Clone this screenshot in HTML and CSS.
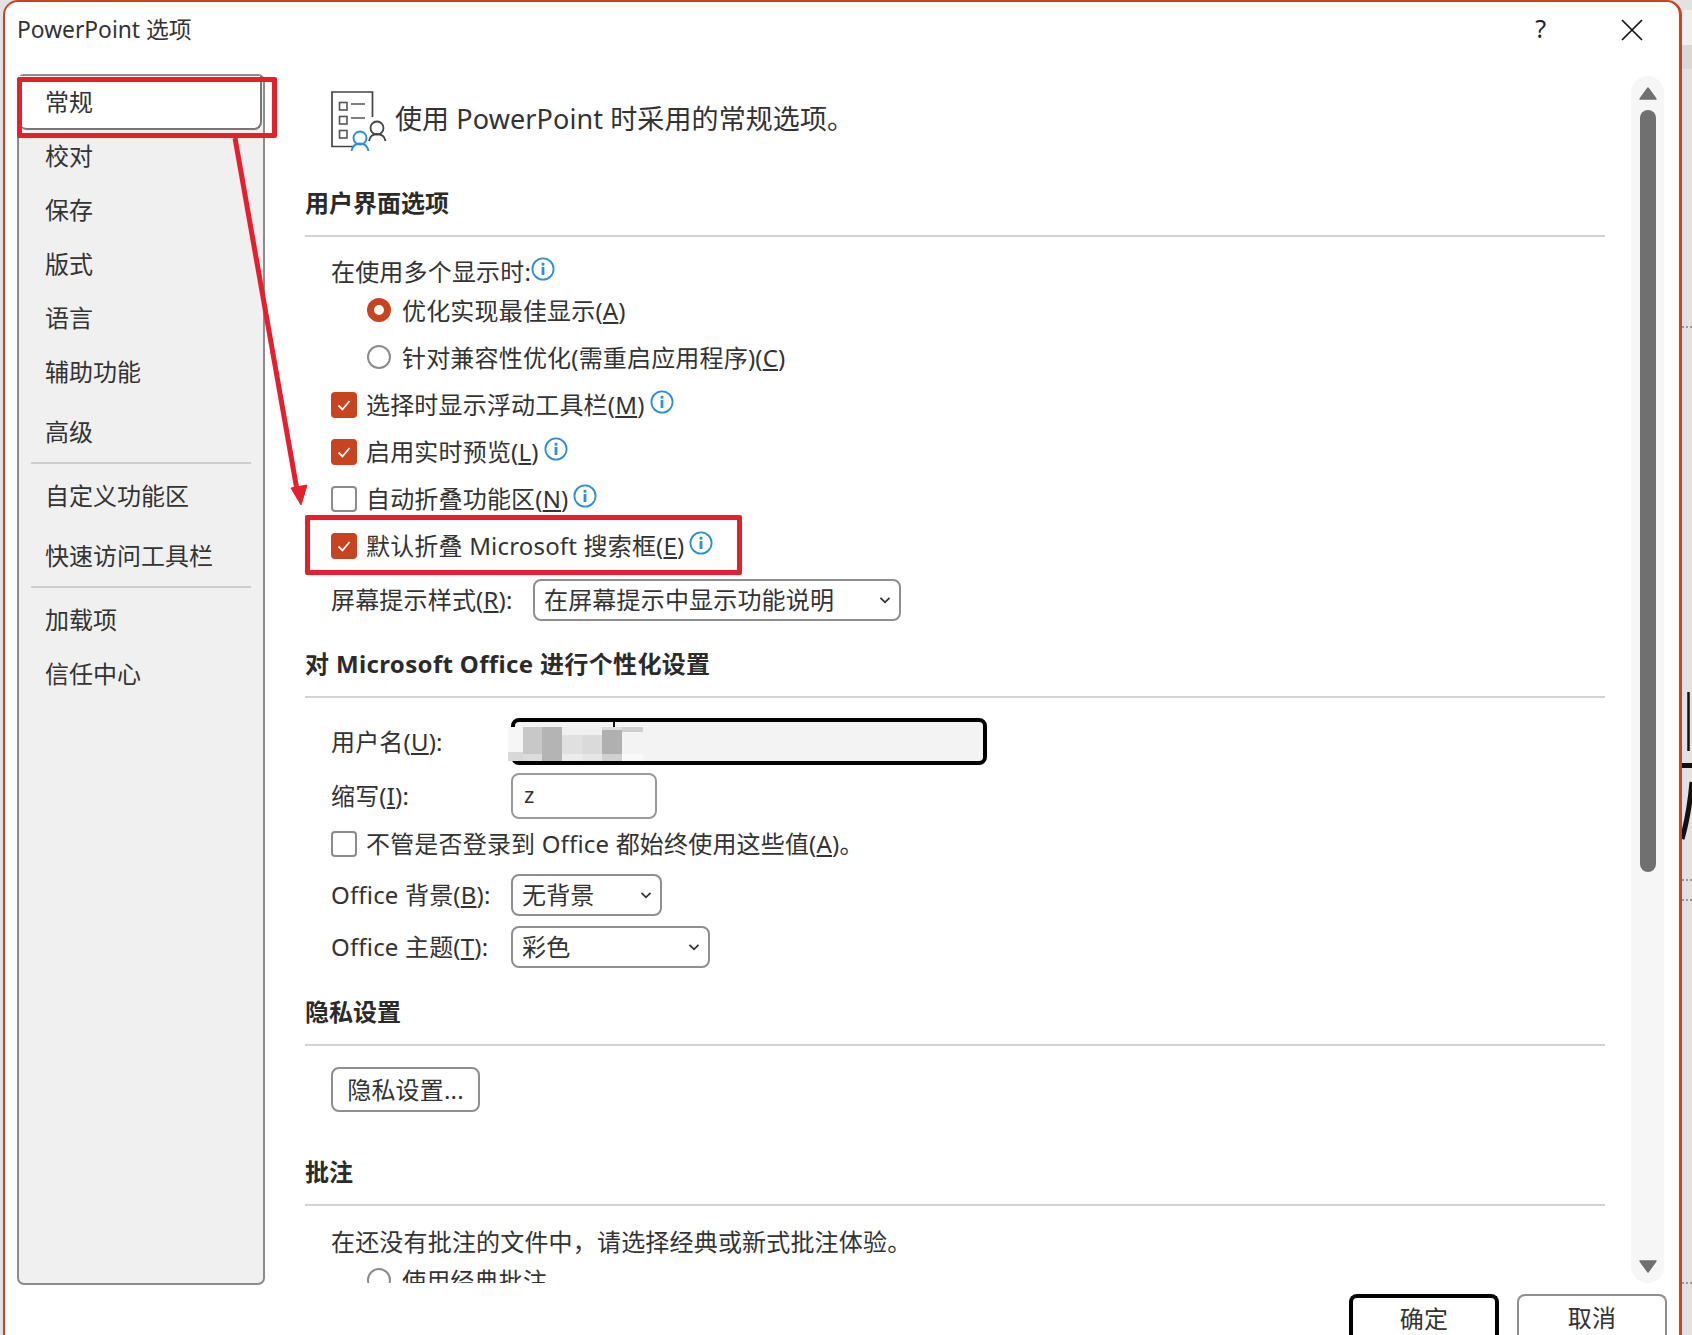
FILE: index.html
```html
<!DOCTYPE html>
<html lang="zh-CN">
<head>
<meta charset="utf-8">
<title>PowerPoint 选项</title>
<link rel="stylesheet" href="styles.css">
</head>
<body>
<svg width="0" height="0" class="defs">
  <symbol id="info" viewBox="0 0 24 24">
    <circle cx="12" cy="12" r="10.6" fill="#fff" stroke="#2f8fcf" stroke-width="1.8"/>
    <rect x="10.6" y="10" width="2.8" height="8" fill="#2f8fcf"/>
    <rect x="10.6" y="5.8" width="2.8" height="2.8" fill="#2f8fcf"/>
  </symbol>
  <symbol id="check" viewBox="0 0 26 26">
    <path d="M7.5 13.5l4 4 7-8.5" fill="none" stroke="#fff" stroke-width="1.8"/>
  </symbol>
  <symbol id="chev" viewBox="0 0 12 12">
    <path d="M1.5 3.8l4.500 4.500 4.500-4.500" fill="none" stroke="#333" stroke-width="1.8"/>
  </symbol>
</svg>

<div class="dialog">
  <header class="titlebar">
    <span class="title">PowerPoint 选项</span>
    <span class="help">?</span>
    <svg class="close" width="22" height="22" viewBox="0 0 22 22"><path d="M1 1l20 20M21 1L1 21" stroke="#111" stroke-width="1.7" fill="none"/></svg>
  </header>

  <div class="panes">
    <nav class="sidebar">
      <div class="nav-item selected">常规</div>
      <div class="nav-item">校对</div>
      <div class="nav-item">保存</div>
      <div class="nav-item">版式</div>
      <div class="nav-item">语言</div>
      <div class="nav-item">辅助功能</div>
      <div class="nav-item advanced">高级</div>
      <div class="nav-sep"></div>
      <div class="nav-item after-sep">自定义功能区</div>
      <div class="nav-item advanced">快速访问工具栏</div>
      <div class="nav-sep"></div>
      <div class="nav-item after-sep-b">加载项</div>
      <div class="nav-item">信任中心</div>
    </nav>

    <main class="content">
      <div class="hero">
        <svg class="hero-icon" width="56" height="60" viewBox="331 91 56 60">
          <path d="M372.5 117V92H332v54.5h21" fill="none" stroke="#444" stroke-width="1.7"/>
          <g fill="none" stroke="#555" stroke-width="1.6">
            <rect x="339.500" y="102.500" width="7.500" height="7.500"/>
            <rect x="339.500" y="116.500" width="7.500" height="7.500"/>
            <rect x="339.500" y="130.500" width="7.500" height="7.500"/>
            <path d="M351 104h14M351 118h14"/>
          </g>
          <circle cx="377" cy="128" r="6.500" fill="#fff" stroke="#444" stroke-width="1.8"/>
          <path d="M369 141c1-5 4-7 8-7s7.500 2 8.500 7" fill="none" stroke="#444" stroke-width="1.8"/>
          <circle cx="360" cy="138" r="6.500" fill="#fff" stroke="#2f8fcf" stroke-width="2"/>
          <path d="M351.500 151c1-5 4.500-7.500 8.500-7.500s7.500 2.500 8.500 7.500" fill="none" stroke="#2f8fcf" stroke-width="2"/>
        </svg>
        <span class="hero-text">使用 PowerPoint 时采用的常规选项。</span>
      </div>

      <h2 class="sec">用户界面选项</h2>
      <div class="row first"><span class="t">在使用多个显示时:</span><svg class="i tight-i"><use href="#info"/></svg></div>
      <div class="row indent near"><span class="radio on"></span><span class="t">优化实现最佳显示(<u>A</u>)</span></div>
      <div class="row indent"><span class="radio"></span><span class="t">针对兼容性优化(需重启应用程序)(<u>C</u>)</span></div>
      <div class="row"><span class="cb on"><svg><use href="#check"/></svg></span><span class="t">选择时显示浮动工具栏(<u>M</u>)</span><svg class="i"><use href="#info"/></svg></div>
      <div class="row"><span class="cb on"><svg><use href="#check"/></svg></span><span class="t">启用实时预览(<u>L</u>)</span><svg class="i"><use href="#info"/></svg></div>
      <div class="row"><span class="cb"></span><span class="t">自动折叠功能区(<u>N</u>)</span><svg class="i"><use href="#info"/></svg></div>
      <div class="row"><span class="cb on"><svg><use href="#check"/></svg></span><span class="t">默认折叠 Microsoft 搜索框(<u>E</u>)</span><svg class="i"><use href="#info"/></svg></div>
      <div class="row tip"><span class="t tip-label">屏幕提示样式(<u>R</u>):</span><span class="select sel-tip"><span class="t">在屏幕提示中显示功能说明</span><svg class="chev"><use href="#chev"/></svg></span></div>

      <h2 class="sec sec2">对 Microsoft Office 进行个性化设置</h2>
      <div class="form user-row">
        <label class="t flabel">用户名(<u>U</u>):</label>
        <div class="input focus">
          <div class="mosaic"><i class="m1"></i><i class="m2"></i><i class="m3"></i><i class="m4"></i><i class="m5"></i><i class="m6"></i><i class="m7"></i></div>
        </div>
      </div>
      <div class="form abbr-row">
        <label class="t flabel">缩写(<u>I</u>):</label>
        <div class="input small">z</div>
      </div>
      <div class="row always"><span class="cb"></span><span class="t">不管是否登录到 Office 都始终使用这些值(<u>A</u>)。</span></div>
      <div class="form bg-row">
        <label class="t flabel">Office 背景(<u>B</u>):</label>
        <span class="select sel-bg"><span class="t">无背景</span><svg class="chev"><use href="#chev"/></svg></span>
      </div>
      <div class="form theme-row">
        <label class="t flabel">Office 主题(<u>T</u>):</label>
        <span class="select sel-theme"><span class="t">彩色</span><svg class="chev"><use href="#chev"/></svg></span>
      </div>

      <h2 class="sec sec3">隐私设置</h2>
      <button class="btn privacy"><span class="t">隐私设置...</span></button>

      <h2 class="sec sec4">批注</h2>
      <div class="row comment"><span class="t">在还没有批注的文件中，请选择经典或新式批注体验。</span></div>
      <div class="row indent near"><span class="radio"></span><span class="t">使用经典批注</span></div>
    </main>

    <aside class="scrollbar">
      <svg class="arrow" width="18" height="13" viewBox="0 0 18 13"><path d="M9 1L17 12H1z" fill="#707070" stroke="#707070" stroke-width="1.500" stroke-linejoin="round"/></svg>
      <div class="thumb"></div>
      <svg class="arrow down" width="18" height="13" viewBox="0 0 18 13"><path d="M1 1H17L9 12z" fill="#707070" stroke="#707070" stroke-width="1.500" stroke-linejoin="round"/></svg>
    </aside>
  </div>

  <footer class="footer">
    <button class="btn action primary"><span class="t">确定</span></button>
    <button class="btn action"><span class="t">取消</span></button>
  </footer>
</div>

<aside class="desktop">
  <svg width="10" height="1335" viewBox="1682 0 10 1335">
    <rect x="1682" y="10" width="10" height="35" fill="#efefef"/>
    <rect x="1682" y="45" width="10" height="24" fill="#d8d8d8"/>
    <path d="M1682 327h10M1682 880h10M1682 900h10M1682 1283h10" stroke="#555" stroke-width="1" stroke-dasharray="2 2"/>
    <path d="M1688.500 692v59" stroke="#111" stroke-width="2.500"/>
    <path d="M1682 765.500h10" stroke="#111" stroke-width="5"/>
    <path d="M1692 782c-2 22-5 40-10 57" fill="none" stroke="#111" stroke-width="5"/>
  </svg>
</aside>

<div class="mark mark-nav"></div>
<div class="mark mark-opt"></div>
<svg class="mark-arrow" width="1692" height="1335" viewBox="0 0 1692 1335">
  <path d="M235 138L297 490" stroke="#e5202e" stroke-width="5" fill="none"/>
  <path d="M291 488L307 485L301 505z" fill="#e5202e" stroke="#e5202e" stroke-linejoin="round"/>
</svg>
</body>
</html>
```

FILE: styles.css
```css
* { box-sizing: border-box; }
html, body { margin: 0; height: 1335px; overflow: hidden; }
body {
  width: 1692px;
  display: flex;
  padding-left: 3px;
  background: #e2e2e2;
  font-family: "Noto Sans", "Noto Sans CJK SC", sans-serif;
  font-size: 24px;
  color: #2b2b2b;
  position: relative;
}
.defs { position: absolute; }

.t { display: block; padding-bottom: 3px; letter-spacing: 0.18px; }

.dialog {
  width: 1679px;
  height: 1335px;
  flex: none;
  background: #fff;
  border: solid #c8431f;
  border-width: 2px 3px 0 2px;
  border-radius: 15px 15px 0 0;
  display: flex;
  flex-direction: column;
  overflow: hidden;
}
.desktop { width: 10px; flex: none; height: 1335px; }
.desktop svg { display: block; }

.titlebar {
  height: 72px;
  flex: none;
  display: flex;
  align-items: flex-start;
  padding: 8px 36px 0 12px;
}
.title { font-size: 22.8px; line-height: 40px; color: #333; }
.help { margin-left: auto; font-size: 25px; line-height: 36px; color: #222; }
.close { margin: 9px 0 0 75px; }

.panes { display: flex; height: 1211px; flex: none; }

.sidebar {
  width: 248px;
  height: 1211px;
  margin-left: 12px;
  flex: none;
  background: #f0f0f0;
  border: 2px solid #8c8c8c;
  border-radius: 7px;
}
.nav-item {
  height: 54px;
  line-height: 52px;
  padding-left: 26px;
  color: #333;
}
.nav-item.selected {
  background: #fff;
  border-radius: 0 0 8px 8px;
  border-bottom: 2px solid #777;
  border-right: 2px solid #777;
  margin-right: 1px;
}
.nav-item.advanced { margin-top: 6px; }
.nav-sep { height: 2px; margin: 2px 12px 0; background: #cdcdcd; }
.nav-item.after-sep { margin-top: 6px; }
.nav-item.after-sep-b { margin-top: 6px; }

.content {
  flex: none;
  width: 1366px;
  height: 1209px;
  padding: 0 26px 0 40px;
  overflow: hidden;
}
.hero { height: 98px; display: flex; align-items: flex-start; padding: 17px 0 0 26px; }
.hero-icon { flex: none; }
.hero-text { margin-left: 8px; font-size: 27px; line-height: 56px; letter-spacing: 0.1px; color: #333; }

.sec {
  height: 65px;
  margin: 0;
  padding-bottom: 4px;
  display: flex;
  align-items: center;
  font-size: 24px;
  font-weight: 700;
  color: #2b2b2b;
  border-bottom: 2px solid #d2d2d2;
}
.sec2 { margin-top: 15px; letter-spacing: 0.35px; }
.sec3 { margin-top: 13px; }
.sec4 { margin-top: 29px; }

.row {
  height: 36px;
  margin: 11px 0 0 26px;
  display: flex;
  align-items: center;
  white-space: nowrap;
  color: #333;
}
.row.first { margin-top: 17px; }
.row.near { margin-top: 3px; }
.row.indent { padding-left: 36px; }
.row.tip { margin-top: 18px; }
.row.always { margin-top: 7px; }
.row.comment { margin-top: 18px; }

.radio {
  width: 24px;
  height: 24px;
  flex: none;
  margin: 0 11px 2px 0;
  border: 2px solid #8c8c8c;
  border-radius: 50%;
  background: #fff;
}
.radio.on { border: 7px solid #c8431f; }

.cb {
  width: 26px;
  height: 26px;
  flex: none;
  margin-right: 9px;
  border: 2px solid #8c8c8c;
  border-radius: 4px;
  background: #fff;
}
.cb.on { background: #c8431f; border: 0; }
.cb svg { display: block; width: 26px; height: 26px; }

.i { width: 24px; height: 24px; flex: none; margin: 0 0 6px 5px; }
.i.tight-i { margin-left: 0; }

.tip-label { width: 202px; flex: none; }
.select {
  height: 42px;
  flex: none;
  display: flex;
  align-items: center;
  justify-content: space-between;
  padding: 0 8px 0 9px;
  border: 2px solid #8f8f8f;
  border-radius: 8px;
  background: #fff;
  color: #333;
}
.chev { width: 12px; height: 12px; flex: none; }
.sel-tip { width: 368px; }
.sel-bg { width: 151px; }
.sel-theme { width: 199px; }

.form { display: flex; align-items: center; margin-left: 26px; white-space: nowrap; color: #333; }
.flabel { width: 180px; flex: none; }
.user-row { margin-top: 20px; }
.abbr-row { margin-top: 8px; }
.bg-row { margin-top: 12px; }
.theme-row { margin-top: 10px; }

.input { border-radius: 8px; background: #fff; position: relative; }
.input.focus { width: 476px; height: 47px; border: 4px solid #000; background: #f3f3f3; }
.input.small {
  width: 146px;
  height: 46px;
  line-height: 38px;
  padding-left: 11px;
  border: 2px solid #9a9a9a;
  font-size: 22px;
}
.mosaic { position: absolute; left: -7px; top: 5px; width: 135px; height: 34px; display: flex; }
.mosaic::before { content: ""; position: absolute; left: 105px; top: -5px; width: 2px; height: 5px; background: #111; }
.mosaic i { display: block; height: 100%; }
.m1 { width: 15px; background: linear-gradient(#f6f6f6 75%, #d8d8d8 75%); }
.m2 { width: 19px; background: linear-gradient(#c8c8c8 80%, #dcdcdc 80%); }
.m3 { width: 20px; background: #b4b4b4; }
.m4 { width: 20px; background: linear-gradient(#f0f0f0 25%, #e0e0e0 25%, #e0e0e0 80%, #ececec 80%); }
.m5 { width: 20px; background: linear-gradient(#f0f0f0 25%, #dadada 25%, #dadada 80%, #e6e6e6 80%); }
.m6 { width: 20px; background: linear-gradient(#dcdcdc 10%, #b0b0b0 10%, #b0b0b0 80%, #d0d0d0 80%); }
.m7 { width: 21px; background: linear-gradient(#cfcfcf 15%, #f3f3f3 15%, #f3f3f3 80%, #f9f9f9 80%); }

.btn {
  font: inherit;
  color: #333;
  background: #fff;
  border: 2px solid #8f8f8f;
  border-radius: 8px;
  padding: 0;
  display: block;
}
.privacy { width: 149px; height: 45px; margin: 21px 0 0 26px; }

.scrollbar {
  width: 33px;
  height: 1207px;
  margin-top: 2px;
  flex: none;
  display: flex;
  flex-direction: column;
  align-items: center;
  padding: 11px 0 10px;
  background: #f6f6f6;
  border-radius: 17px;
}
.arrow { flex: none; display: block; }
.arrow.down { margin-top: auto; }
.thumb { width: 16px; height: 762px; margin-top: 10px; background: #707070; border-radius: 8px; flex: none; }

.footer {
  display: flex;
  justify-content: flex-end;
  gap: 18px;
  padding: 9px 12px 0 0;
}
.btn.action { width: 150px; height: 46px; flex: none; border-bottom-width: 0; border-radius: 8px 8px 0 0; }
.btn.primary { border: 4px solid #000; border-bottom-width: 0; }

.mark { position: absolute; border: 5px solid #e5202e; border-radius: 2px; }
.mark-nav { left: 17px; top: 77px; width: 260px; height: 61px; }
.mark-opt { left: 305px; top: 515px; width: 437px; height: 60px; }
.mark-arrow { position: absolute; left: 0; top: 0; pointer-events: none; }
```
